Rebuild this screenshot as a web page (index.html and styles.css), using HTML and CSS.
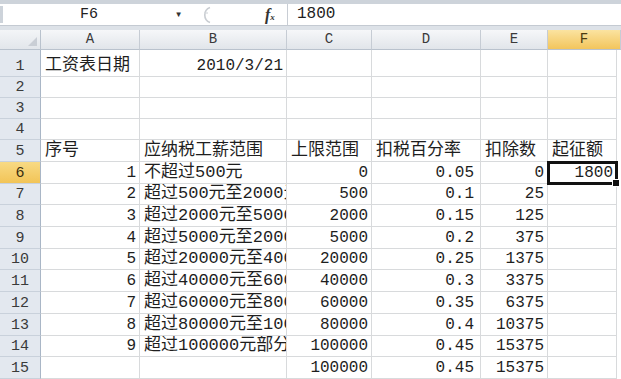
FILE: index.html
```html
<!DOCTYPE html>
<html lang="zh-CN">
<head>
    <meta charset="UTF-8" />
    <title>工资表</title>
    <link rel="stylesheet" href="styles.css">
</head>
<body>
    <div class="topstrip"></div>
    <div class="formulabar">
        <div class="namebox">F6</div>
        <div class="dropdown">&#9662;</div>
        <div class="expander">
            <svg width="22" height="20" viewBox="0 0 22 20">
                <path d="M15 2.5 A8 8 0 0 0 15 17.5" fill="none" stroke="#c9cdd2" stroke-width="1.6"/>
                <path d="M9 8 L13 8" stroke="#d6d9dd" stroke-width="1.2"/>
            </svg>
        </div>
        <div class="fx"><i>f</i><small>x</small></div>
        <div class="formula">1800</div>
    </div>
    <div class="band"></div>

    <div class="sheet">
        <div class="corner"><span class="tri"></span></div>
        <div class="ch">A</div><div class="ch">B</div><div class="ch">C</div>
        <div class="ch">D</div><div class="ch">E</div><div class="ch active">F</div>

        <div class="rh">1</div>
        <div class="c zh">工资表日期</div><div class="c r">2010/3/21</div>
        <div class="c"></div><div class="c"></div><div class="c"></div><div class="c"></div>

        <div class="rh">2</div>
        <div class="c"></div><div class="c"></div><div class="c"></div><div class="c"></div><div class="c"></div><div class="c"></div>
        <div class="rh">3</div>
        <div class="c"></div><div class="c"></div><div class="c"></div><div class="c"></div><div class="c"></div><div class="c"></div>
        <div class="rh">4</div>
        <div class="c"></div><div class="c"></div><div class="c"></div><div class="c"></div><div class="c"></div><div class="c"></div>

        <div class="rh">5</div>
        <div class="c zh">序号</div><div class="c zh">应纳税工薪范围</div><div class="c zh">上限范围</div>
        <div class="c zh">扣税百分率</div><div class="c zh">扣除数</div><div class="c zh">起征额</div>

        <div class="rh active">6</div>
        <div class="c r">1</div><div class="c zh">不超过500元</div><div class="c r">0</div>
        <div class="c r d">0.05</div><div class="c r">0</div><div class="c r selected">1800<span class="handle"></span></div>

        <div class="rh">7</div>
        <div class="c r">2</div><div class="c zh">超过500元至2000元</div><div class="c r">500</div>
        <div class="c r d">0.1</div><div class="c r">25</div><div class="c"></div>

        <div class="rh">8</div>
        <div class="c r">3</div><div class="c zh">超过2000元至5000元</div><div class="c r">2000</div>
        <div class="c r d">0.15</div><div class="c r">125</div><div class="c"></div>

        <div class="rh">9</div>
        <div class="c r">4</div><div class="c zh">超过5000元至20000元</div><div class="c r">5000</div>
        <div class="c r d">0.2</div><div class="c r">375</div><div class="c"></div>

        <div class="rh">10</div>
        <div class="c r">5</div><div class="c zh">超过20000元至40000元</div><div class="c r">20000</div>
        <div class="c r d">0.25</div><div class="c r">1375</div><div class="c"></div>

        <div class="rh">11</div>
        <div class="c r">6</div><div class="c zh">超过40000元至60000元</div><div class="c r">40000</div>
        <div class="c r d">0.3</div><div class="c r">3375</div><div class="c"></div>

        <div class="rh">12</div>
        <div class="c r">7</div><div class="c zh">超过60000元至80000元</div><div class="c r">60000</div>
        <div class="c r d">0.35</div><div class="c r">6375</div><div class="c"></div>

        <div class="rh">13</div>
        <div class="c r">8</div><div class="c zh">超过80000元至100000元</div><div class="c r">80000</div>
        <div class="c r d">0.4</div><div class="c r">10375</div><div class="c"></div>

        <div class="rh">14</div>
        <div class="c r">9</div><div class="c zh">超过100000元部分</div><div class="c r">100000</div>
        <div class="c r d">0.45</div><div class="c r">15375</div><div class="c"></div>

        <div class="rh">15</div>
        <div class="c"></div><div class="c"></div><div class="c r">100000</div>
        <div class="c r d">0.45</div><div class="c r">15375</div><div class="c"></div>
    </div>
</body>
</html>
```

FILE: styles.css
```css
body {
    margin: 0;
    background-color: #ffffff;
    font-family: "Liberation Mono", "Noto Sans CJK SC", monospace;
    color: #1e1e1e;
    overflow: hidden;
}
.topstrip {
    height: 4px;
    background-color: #cdd3da;
}
.formulabar {
    display: flex;
    height: 21px;
    background-color: #ffffff;
    align-items: center;
}
.namebox {
    width: 172px;
    text-align: center;
    font-size: 15px;
    color: #222;
    border-left: 3px solid #cdd3da;
}
.dropdown {
    width: 14px;
    font-size: 12px;
    color: #333;
}
.expander {
    width: 70px;
    height: 20px;
    padding-left: 6px;
}
.fx {
    width: 22px;
    font-family: "Liberation Serif", serif;
    font-weight: bold;
    font-size: 16px;
    color: #333;
}
.fx small {
    font-size: 9px;
    font-style: italic;
}
.formula {
    flex: 1;
    height: 21px;
    line-height: 21px;
    padding-left: 9px;
    font-size: 16px;
    border-left: 1px solid #c8cdd4;
}
.band {
    height: 5px;
    background-color: #dde2e8;
    border-top: 1px solid #c4cad2;
    box-sizing: border-box;
}
.sheet {
    display: grid;
    grid-template-columns: 41px 99px 147px 85px 109px 67px 69px 4px;
    grid-template-rows: 20px 27px 21px 21px 21px 22px repeat(10, 21.7px);
}
.corner {
    grid-column: 1;
    background: linear-gradient(#f3f5f7, #e2e6eb);
    border-right: 1px solid #b9c2cd;
    border-bottom: 1px solid #b9c2cd;
    box-sizing: border-box;
    position: relative;
}
.tri {
    position: absolute;
    right: 3px;
    bottom: 3px;
    width: 0;
    height: 0;
    border-left: 9px solid transparent;
    border-bottom: 9px solid #c9ced5;
}
.ch {
    background: linear-gradient(#f6f7f9, #e1e5ea);
    border-right: 1px solid #c6ccd4;
    border-bottom: 1px solid #b9c2cd;
    box-sizing: border-box;
    text-align: center;
    font-size: 14px;
    line-height: 19px;
    color: #3a3a3a;
}
.ch:nth-child(7) {
    grid-column: 7 / span 2;
}
.ch.active {
    background: linear-gradient(#fbe3a0, #f2c55c);
    color: #4a3a10;
}
.rh {
    grid-column: 1;
    background-color: #e3e8ef;
    border-right: 1px solid #a9b6c6;
    border-bottom: 1px solid #c9d1db;
    box-sizing: border-box;
    display: flex;
    align-items: flex-end;
    justify-content: center;
    padding-bottom: 2px;
    font-size: 15px;
    line-height: 1;
    color: #3a3a3a;
}
.rh.active {
    background: linear-gradient(#f8da84, #f2c457);
    color: #3a2e10;
}
.c {
    border-right: 1px solid #d8dadc;
    border-bottom: 1px solid #d8dadc;
    box-sizing: border-box;
    display: flex;
    align-items: flex-end;
    padding: 0 3px 2px 4px;
    font-size: 16px;
    line-height: 1;
    white-space: nowrap;
    overflow: hidden;
}
.zh {
    font-size: 17px;
}
.r {
    justify-content: flex-end;
}
.d {
    padding-right: 6px;
}
.selected {
    position: relative;
    overflow: visible;
    outline: 3px solid #111111;
    outline-offset: -2px;
    z-index: 2;
}
.handle {
    position: absolute;
    right: -4px;
    bottom: -4px;
    width: 6px;
    height: 6px;
    background-color: #111111;
    border: 1px solid #ffffff;
}
```
